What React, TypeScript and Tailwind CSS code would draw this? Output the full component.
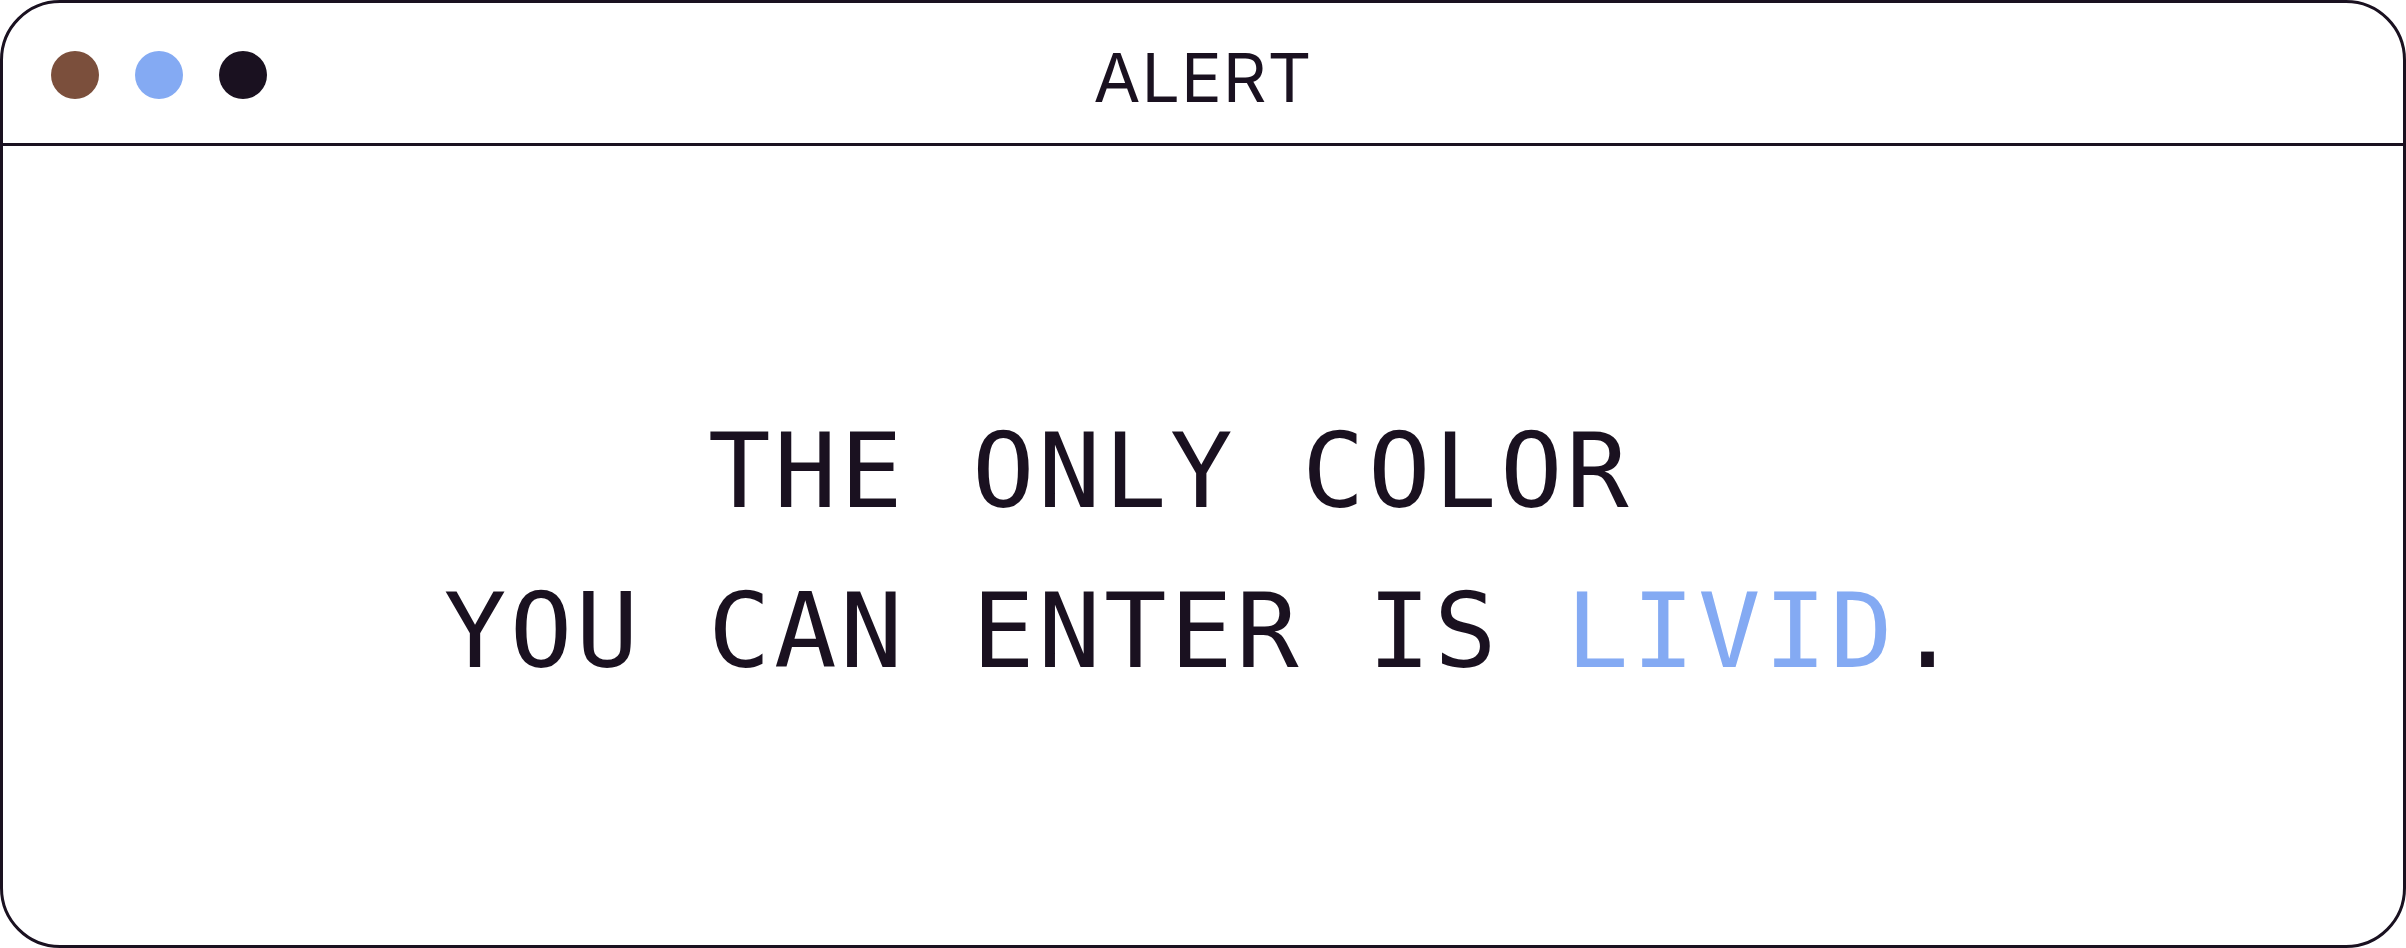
import React from 'react';

const INK = '#1a1120';

function Dot({ className }: { className: string }) {
  return <span className={`block h-12 w-12 rounded-full ${className}`} />;
}

export default function App() {
  return (
    <div className="h-[948px] w-full bg-white">
      <div className="flex h-full w-full flex-col overflow-hidden rounded-[60px] border-[3px] border-[#1a1120] bg-white">
        {/* title bar */}
        <div className="relative flex h-[143px] shrink-0 items-center border-b-[3px] border-[#1a1120] pt-1">
          <div className="flex items-center gap-9 pl-12">
            <Dot className="bg-[#7b4f3c]" />
            <Dot className="bg-[#84aaf3]" />
            <Dot className="bg-[#1a1120]" />
          </div>
          <div className="pointer-events-none absolute inset-0 flex items-center justify-center pt-[7px]">
            <span className="font-['Inter','Liberation_Sans',sans-serif] text-[68px] font-normal leading-none tracking-[1px] text-[#1a1120]">
              ALERT
            </span>
          </div>
        </div>

        {/* message */}
        <div className="flex flex-1 flex-col items-center justify-center pt-[10px]">
          <p
            className="text-center font-['DejaVu_Sans_Mono','Liberation_Mono',monospace] text-[104px] leading-[160px] tracking-[3.4px]"
            style={{ color: INK }}
          >
            <span className="block whitespace-pre">THE ONLY COLOR&nbsp;</span>
            <span className="block whitespace-pre">
              YOU CAN ENTER IS <span className="text-[#84aaf3]">LIVID</span>.
            </span>
          </p>
        </div>
      </div>
    </div>
  );
}
